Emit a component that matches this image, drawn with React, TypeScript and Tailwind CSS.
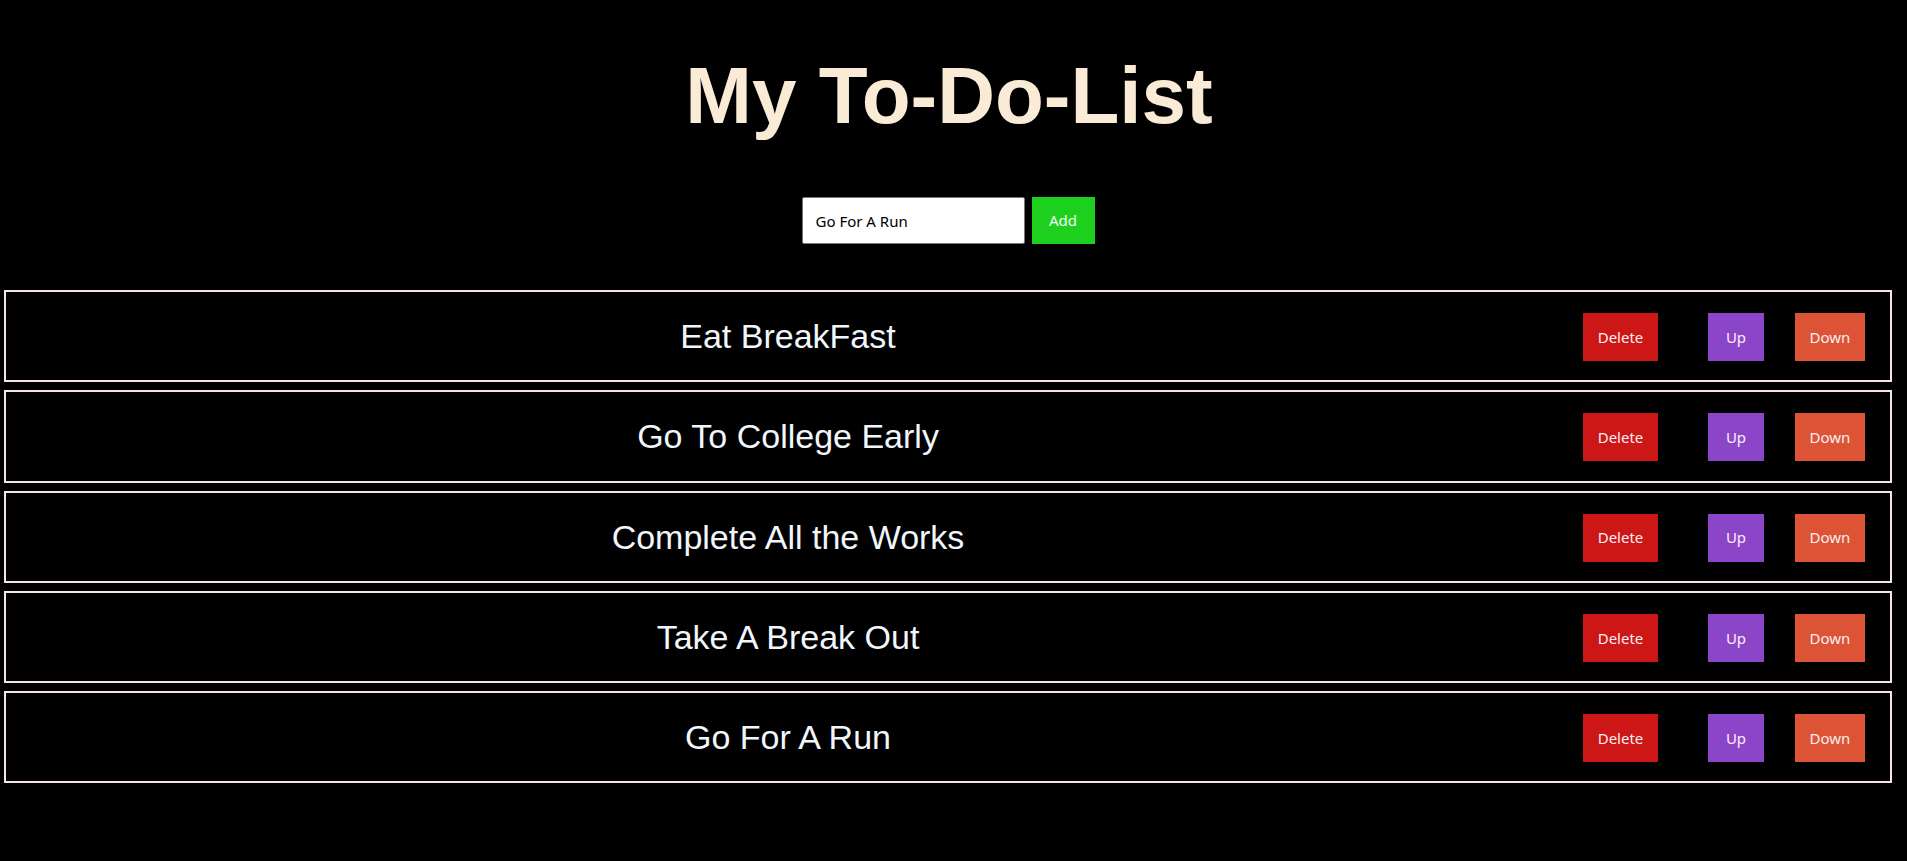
const todos = [
  "Eat BreakFast",
  "Go To College Early",
  "Complete All the Works",
  "Take A Break Out",
  "Go For A Run",
];

const btnFont = { fontFamily: '"Noto Sans", "Open Sans", sans-serif' };

function TodoRow({ text }: { text: string }) {
  return (
    <li className="flex h-[92.25px] items-center border-2 border-[#f7e6e9] pr-[25px]">
      <span className="flex-1 text-center text-[34px] leading-none text-[#f0f6fb] [font-family:'Liberation_Sans',Arial,sans-serif]">
        {text}
      </span>
      <button
        style={btnFont}
        className="ml-[13px] mt-[2px] h-[48px] w-[75px] bg-[#cd1717] text-[15px] text-[#fbeef2]"
      >
        Delete
      </button>
      <button
        style={btnFont}
        className="ml-[50px] mt-[2px] h-[48px] w-[56px] bg-[#8b45c8] text-[15px] text-[#fbeef2]"
      >
        Up
      </button>
      <button
        style={btnFont}
        className="ml-[31px] mt-[2px] h-[48px] w-[70px] bg-[#dc5335] text-[15px] text-[#fbeef2]"
      >
        Down
      </button>
    </li>
  );
}

export default function App() {
  return (
    <div className="min-h-[861px] bg-black">
      <h1 className="pt-[49px] pr-[9px] text-center text-[80px] font-bold leading-[93px] text-[#faebd7] [font-family:'Liberation_Sans',Arial,sans-serif]">
        My To-Do-List
      </h1>
      <div className="mt-[55px] flex justify-center gap-[7px] pr-[11px]">
        <input
          readOnly
          value="Go For A Run"
          style={btnFont}
          className="h-[47px] w-[223px] rounded-[2px] border border-[#767676] bg-white px-[13px] text-[15px] text-black outline-none"
        />
        <button
          style={btnFont}
          className="h-[47px] w-[63px] bg-[#1ed01e] text-[15px] text-[#f3fbf3]"
        >
          Add
        </button>
      </div>
      <ul className="mt-[46px] flex flex-col gap-[8px] pl-[4px] pr-[15px]">
        {todos.map((t) => (
          <TodoRow key={t} text={t} />
        ))}
      </ul>
    </div>
  );
}
